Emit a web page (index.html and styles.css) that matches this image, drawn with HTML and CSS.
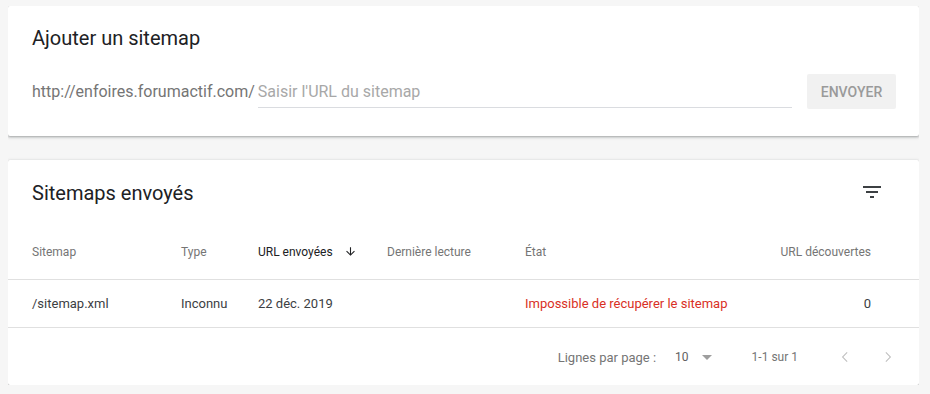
FILE: index.html
```html
<!DOCTYPE html>
<html lang="fr">
<head>
    <meta charset="UTF-8">
    <title>Sitemaps</title>
    <link rel="stylesheet" href="styles.css">
</head>
<body>
    <div class="card add-card">
        <h2 class="card-title">Ajouter un sitemap</h2>
        <div class="add-row">
            <span class="prefix">http://enfoires.forumactif.com/</span>
            <input class="url-input" type="text" placeholder="Saisir l'URL du sitemap">
            <button class="send-btn">ENVOYER</button>
        </div>
    </div>

    <div class="card list-card">
        <div class="list-head">
            <h2 class="card-title">Sitemaps envoyés</h2>
            <svg class="filter-icon" width="24" height="24" viewBox="0 0 24 24">
                <path d="M10 18h4v-2h-4v2zM3 6v2h18V6H3zm3 7h12v-2H6v2z" fill="#3c4043"/>
            </svg>
        </div>

        <table class="sitemaps">
            <colgroup>
                <col class="c-sitemap">
                <col class="c-type">
                <col class="c-sent">
                <col class="c-read">
                <col>
                <col class="c-found">
            </colgroup>
            <thead>
                <tr>
                    <th>Sitemap</th>
                    <th>Type</th>
                    <th class="sorted">URL envoyées
                        <svg class="sort-arrow" width="13" height="13" viewBox="0 0 24 24">
                            <path d="M20 12l-1.41-1.41L13 16.17V4h-2v12.17l-5.58-5.59L4 12l8 8 8-8z" fill="#202124"/>
                        </svg>
                    </th>
                    <th>Dernière lecture</th>
                    <th>État</th>
                    <th class="num">URL découvertes</th>
                </tr>
            </thead>
            <tbody>
                <tr>
                    <td>/sitemap.xml</td>
                    <td>Inconnu</td>
                    <td>22 déc. 2019</td>
                    <td></td>
                    <td class="error">Impossible de récupérer le sitemap</td>
                    <td class="num">0</td>
                </tr>
            </tbody>
        </table>

        <div class="pager">
            <span class="rows-label">Lignes par page :</span>
            <span class="rows-value">10</span>
            <svg class="drop" width="24" height="24" viewBox="0 0 24 24">
                <path d="M7 10l5 5 5-5z" fill="#9e9e9e"/>
            </svg>
            <span class="range">1-1 sur 1</span>
            <svg class="chev" width="24" height="24" viewBox="0 0 24 24">
                <path d="M14.5 7.8L13.8 7.1 8.9 12l4.9 4.9.7-.7L10.3 12z" fill="#bdbdbd"/>
            </svg>
            <svg class="chev" width="24" height="24" viewBox="0 0 24 24">
                <path d="M9.5 7.8l.7-.7 4.9 4.9-4.9 4.9-.7-.7 4.2-4.2z" fill="#bdbdbd"/>
            </svg>
        </div>
    </div>
</body>
</html>
```

FILE: styles.css
```css
body {
    margin: 6px 11px 0 8px;
    background-color: #f6f6f6;
    font-family: Roboto, 'Liberation Sans', sans-serif;
    color: #202124;
}
.card {
    background-color: #fff;
    border-radius: 2px;
    box-shadow: 0 1px 2px rgba(60, 64, 67, 0.3), 0 1px 3px 1px rgba(60, 64, 67, 0.15);
}
.card-title {
    margin: 0;
    font-size: 20px;
    font-weight: 400;
    line-height: 28px;
    color: #202124;
}
.add-card {
    padding: 18px 23px 27px 24px;
    height: 130px;
    box-sizing: border-box;
}
.add-row {
    display: flex;
    align-items: center;
    margin-top: 22px;
}
.prefix {
    font-size: 16px;
    color: #757575;
    margin-right: 3px;
}
.url-input {
    flex: 1;
    height: 32px;
    padding: 0;
    border: none;
    border-bottom: 1px solid #dadce0;
    font-family: inherit;
    font-size: 16px;
    color: #202124;
    outline: none;
    margin-right: 15px;
}
.url-input::placeholder {
    color: #a8a8a8;
}
.send-btn {
    width: 89px;
    height: 35px;
    border: none;
    border-radius: 2px;
    background-color: #f1f1f1;
    color: #9a9a9a;
    font-family: inherit;
    font-size: 14px;
    font-weight: 500;
}
.list-card {
    margin-top: 24px;
}
.list-head {
    display: flex;
    align-items: center;
    justify-content: space-between;
    height: 64px;
    padding: 0 35px 0 24px;
}
.list-head .card-title {
    margin-top: 2px;
}
.sitemaps {
    width: 100%;
    border-collapse: collapse;
    table-layout: fixed;
}
.c-sitemap { width: 173px; }
.c-type { width: 77px; }
.c-sent { width: 129px; }
.c-read { width: 138px; }
.c-found { width: 160px; }
th, td {
    padding: 0;
    text-align: left;
    white-space: nowrap;
    border-bottom: 1px solid #e0e0e0;
}
th:first-child, td:first-child {
    padding-left: 24px;
}
th {
    height: 55px;
    font-size: 12px;
    font-weight: 400;
    color: #757575;
}
th.sorted {
    color: #202124;
}
.sort-arrow {
    margin-left: 8px;
    vertical-align: -2px;
}
td {
    height: 47px;
    font-size: 13px;
    color: #3c4043;
}
.num {
    text-align: right;
    padding-right: 48px;
}
td.error {
    color: #d93025;
}
.pager {
    display: flex;
    align-items: center;
    justify-content: flex-end;
    height: 57px;
    padding-top: 1px;
    box-sizing: border-box;
    padding-right: 19px;
    font-size: 12px;
    color: #757575;
}
.rows-label {
    font-size: 13px;
}
.rows-value {
    margin-left: 19px;
    color: #616161;
}
.drop {
    margin-left: 6px;
}
.range {
    margin-left: 33px;
}
.chev {
    margin-left: 35px;
}
.chev + .chev {
    margin-left: 19px;
}
```
